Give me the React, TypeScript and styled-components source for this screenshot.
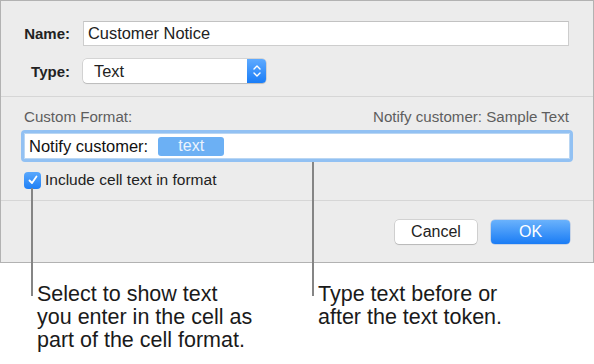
import React from "react";
import styled, { createGlobalStyle } from "styled-components";

const Global = createGlobalStyle`
  html, body { margin: 0; padding: 0; background: #ffffff; }
  body { font-family: "Liberation Sans", Arial, sans-serif; color: #1e1e1e; }
  * { box-sizing: border-box; }
`;

const Page = styled.div`
  position: relative;
  width: 594px;
  height: 364px;
  overflow: hidden;
  background: #ffffff;
`;

const Dialog = styled.div`
  width: 594px;
  height: 263px;
  background: #ececec;
  border: 1px solid #b2b2b2;
  display: flex;
  flex-direction: column;
`;

const TopSection = styled.div`
  height: 96px;
  padding: 20px 24px 13px 0;
  border-bottom: 1px solid #d6d6d6;
  display: flex;
  flex-direction: column;
  gap: 13px;
`;

const FieldRow = styled.div<{ $h: number }>`
  display: flex;
  align-items: center;
  height: ${(p) => p.$h}px;
`;

const Label = styled.div`
  width: 69px;
  margin-right: 13px;
  text-align: right;
  font-weight: bold;
  font-size: 15px;
  color: #222;
`;

const TextInput = styled.div`
  flex: 1;
  height: 25px;
  background: #ffffff;
  border: 1px solid #cdcdcd;
  border-top-color: #c2c2c2;
  display: flex;
  align-items: center;
  padding-left: 4px;
  font-size: 16.4px;
  color: #222;
`;

const Popup = styled.div`
  width: 183px;
  height: 24px;
  background: #ffffff;
  border-radius: 4px;
  box-shadow: 0 0 0 0.5px rgba(0, 0, 0, 0.2), 0 1px 1px rgba(0, 0, 0, 0.12);
  display: flex;
  align-items: center;
  overflow: hidden;
`;

const PopupText = styled.div`
  flex: 1;
  padding-left: 11px;
  font-size: 16.4px;
  color: #222;
`;

const Stepper = styled.div`
  width: 19px;
  height: 100%;
  background: linear-gradient(#5eaaff, #1a7df7);
  display: flex;
  align-items: center;
  justify-content: center;
`;

const MiddleSection = styled.div`
  height: 104px;
  padding: 10px 0 12px 0;
  border-bottom: 1px solid #d6d6d6;
  display: flex;
  flex-direction: column;
`;

const HeaderRow = styled.div`
  height: 18px;
  display: flex;
  justify-content: space-between;
  align-items: center;
  padding: 0 24px 0 23px;
  font-size: 15.1px;
  color: #5e5e5e;
`;

const FormatField = styled.div`
  margin: 5px 20px 0 20px;
  height: 32px;
  border: 3px solid #92c1f3;
  border-radius: 4px;
  background: #ffffff;
  box-shadow: inset 0 0 0 1px #b9d6f3;
  display: flex;
  align-items: center;
  padding-left: 5px;
  font-size: 16.5px;
  color: #111;
`;

const Token = styled.span`
  margin-left: 10px;
  width: 66px;
  height: 19px;
  border-radius: 3px;
  background: #6cb0f4;
  color: #eaf3fd;
  font-size: 16px;
  display: flex;
  align-items: center;
  justify-content: center;
  padding-bottom: 1px;
`;

const CheckRow = styled.div`
  margin-top: 10px;
  height: 16px;
  display: flex;
  align-items: center;
  padding-left: 23px;
  gap: 4px;
  font-size: 15.5px;
  color: #222;
`;

const CheckBox = styled.div`
  width: 17px;
  height: 17px;
  border-radius: 4px;
  background: linear-gradient(#5aa8fd, #1f80f6);
  display: flex;
  align-items: center;
  justify-content: center;
`;

const Footer = styled.div`
  flex: 1;
  display: flex;
  justify-content: flex-end;
  align-items: flex-start;
  gap: 14px;
  padding: 19px 23px 0 0;
`;

const Button = styled.div<{ $primary?: boolean; $w: number }>`
  width: ${(p) => p.$w}px;
  height: 24px;
  border-radius: 4px;
  display: flex;
  align-items: center;
  justify-content: center;
  font-size: 16px;
  color: ${(p) => (p.$primary ? "#ffffff" : "#222")};
  background: ${(p) =>
    p.$primary ? "linear-gradient(#6ab2fc, #1a7cf5)" : "#ffffff"};
  box-shadow: ${(p) =>
    p.$primary
      ? "0 0 0 0.5px rgba(0,80,200,0.3)"
      : "0 0 0 0.5px rgba(0,0,0,0.22), 0 1px 1px rgba(0,0,0,0.12)"};
`;

const Annotations = styled.div`
  display: flex;
  padding: 20px 0 0 37px;
`;

const Note = styled.div<{ $w: number }>`
  width: ${(p) => p.$w}px;
  font-size: 21.5px;
  line-height: 23px;
  color: #1a1a1a;
`;

const Callout = styled.div<{ $x: number; $top: number; $bottom: number }>`
  position: absolute;
  left: ${(p) => p.$x}px;
  top: ${(p) => p.$top}px;
  height: ${(p) => p.$bottom - p.$top}px;
  width: 2px;
  background: #858585;
`;

export default function App() {
  return (
    <Page>
      <Global />
      <Dialog>
        <TopSection>
          <FieldRow $h={25}>
            <Label>Name:</Label>
            <TextInput>Customer Notice</TextInput>
          </FieldRow>
          <FieldRow $h={24}>
            <Label>Type:</Label>
            <Popup>
              <PopupText>Text</PopupText>
              <Stepper>
                <svg width="10" height="16" viewBox="0 0 10 16">
                  <path
                    d="M2 6 L5 3 L8 6 M2 10 L5 13 L8 10"
                    fill="none"
                    stroke="#ffffff"
                    strokeWidth="1.4"
                    strokeLinecap="round"
                    strokeLinejoin="round"
                  />
                </svg>
              </Stepper>
            </Popup>
          </FieldRow>
        </TopSection>
        <MiddleSection>
          <HeaderRow>
            <span>Custom Format:</span>
            <span>Notify customer: Sample Text</span>
          </HeaderRow>
          <FormatField>
            <span>Notify customer:</span>
            <Token>text</Token>
          </FormatField>
          <CheckRow>
            <CheckBox>
              <svg width="12" height="12" viewBox="0 0 12 12">
                <path
                  d="M2.5 6.5 L5 9 L9.5 2.5"
                  fill="none"
                  stroke="#ffffff"
                  strokeWidth="1.8"
                  strokeLinecap="round"
                  strokeLinejoin="round"
                />
              </svg>
            </CheckBox>
            <span>Include cell text in format</span>
          </CheckRow>
        </MiddleSection>
        <Footer>
          <Button $w={82}>Cancel</Button>
          <Button $w={79} $primary>
            OK
          </Button>
        </Footer>
      </Dialog>
      <Annotations>
        <Note $w={281}>
          Select to show text
          <br />
          you enter in the cell as
          <br />
          part of the cell format.
        </Note>
        <Note $w={250}>
          Type text before or
          <br />
          after the text token.
        </Note>
      </Annotations>
      <Callout $x={31} $top={188} $bottom={296} />
      <Callout $x={312} $top={162} $bottom={296} />
    </Page>
  );
}
